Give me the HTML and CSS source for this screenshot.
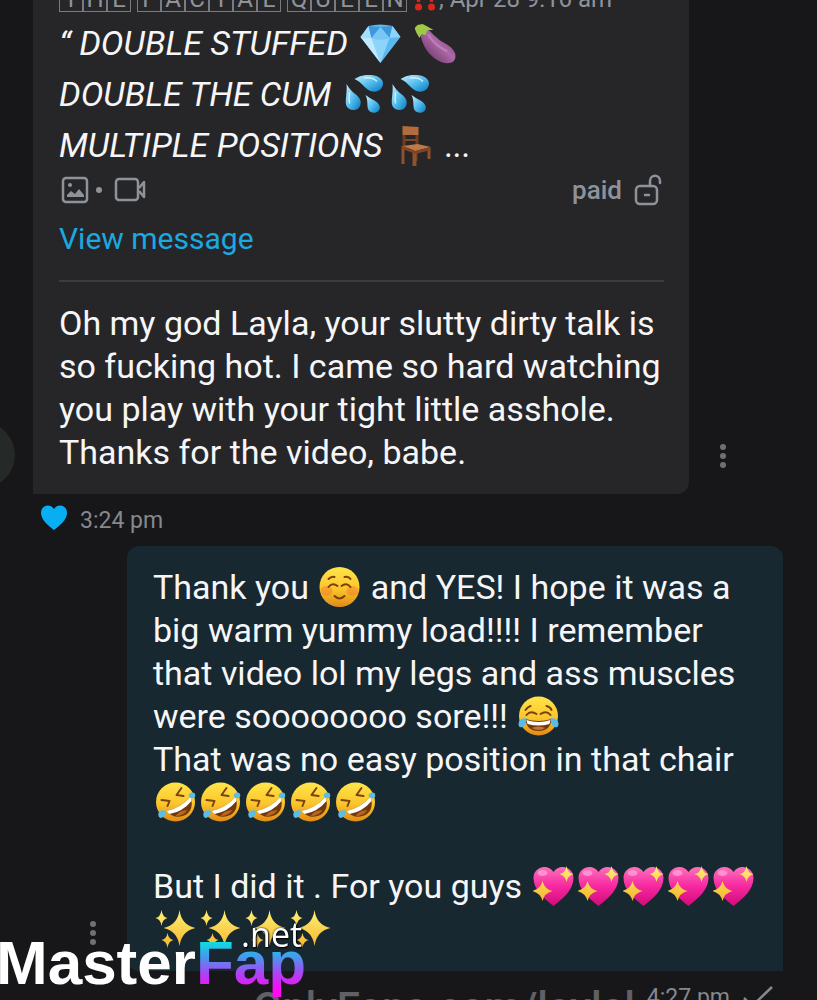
FILE: index.html
```
<!DOCTYPE html>
<html lang="en">
<head>
  <meta charset="UTF-8">
  <meta name="viewport" content="width=device-width, initial-scale=1.0">
  <title>Messages</title>
  <link rel="stylesheet" href="styles.css">
</head>
<body>
  <!-- Emoji and icon shapes -->
  <svg class="defs" aria-hidden="true">
    <defs>
      <linearGradient id="gFace" x1="0" y1="0" x2="0" y2="1"><stop offset="0" stop-color="#ffe54a"/><stop offset=".55" stop-color="#fbc52c"/><stop offset="1" stop-color="#e08a16"/></linearGradient>
      <linearGradient id="gDrop" x1="0" y1="0" x2="1" y2="1"><stop offset="0" stop-color="#c9f1ff"/><stop offset=".55" stop-color="#4db9ec"/><stop offset="1" stop-color="#0879bd"/></linearGradient>
      <linearGradient id="gEgg" x1="1" y1="0" x2="0" y2="1"><stop offset="0" stop-color="#653064"/><stop offset=".45" stop-color="#ad69a8"/><stop offset="1" stop-color="#56234f"/></linearGradient>
      <linearGradient id="gHeart" x1="0" y1="0" x2="0" y2="1"><stop offset="0" stop-color="#ff70bd"/><stop offset=".5" stop-color="#f6279f"/><stop offset="1" stop-color="#d20a79"/></linearGradient>
      <linearGradient id="gStar" x1="0" y1="0" x2="0" y2="1"><stop offset="0" stop-color="#fff073"/><stop offset="1" stop-color="#f4b52e"/></linearGradient>
    </defs>
    <symbol id="gem" viewBox="0 0 40 40">
      <path fill="#5cb8f1" d="M0 13 8 2q12-3 24 0l8 11-20 26z"/>
      <path fill="#a7ddfb" d="M8 2 0 13l11 1z"/>
      <path fill="#3f97dc" d="M8 2 11 14 20 3zM32 2 29 14 20 3z"/>
      <path fill="#76c7f5" d="M20 3 11 14q9 3 18 0z"/>
      <path fill="#8dd4fb" d="M32 2l8 11-11 1zM11 14q9 3 18 0l-9 25z"/>
      <path fill="#bfe9ff" d="M0 13l11 1 9 25z"/>
    </symbol>
    <symbol id="eggplant" viewBox="0 0 40 40">
      <path fill="url(#gEgg)" d="M4 7 12 5c5 4 9 10 17 14 9 5 13 11 10 17-3 5-12 4-19-1C10 28 6 18 4 7z"/>
      <path fill="none" stroke="#cf93ca" stroke-width="2" stroke-linecap="round" opacity=".6" d="M13 11c4 7 10 12 18 16"/>
      <path fill="#9fc944" d="M2 1 7 0l4 2 7 4-6 0-2 5-4-1-2 4-3-5-2-5z"/>
    </symbol>
    <symbol id="drops" viewBox="0 0 40 40">
      <path fill="url(#gDrop)" d="M10 4q8-5 17-4c9 1 13 6 11 11-2 6-9 7-14 4C18 11 17 7 10 4z"/>
      <path fill="url(#gDrop)" d="M2 9q4 7 10 11c6 5 5 11 1 14-4 2-9 1-11-3C0 26 3 18 2 9z"/>
      <path fill="url(#gDrop)" d="M21 20q4 3 8 5c6 3 8 8 5 11-3 3-8 2-10-1-2-4 0-9-3-15z"/>
      <path fill="none" stroke="#e4f9ff" stroke-width="1.5" stroke-linecap="round" opacity=".8" d="M20 3q8-1 12 3M5 18q-1 6 0 10"/>
    </symbol>
    <symbol id="chair" viewBox="0 0 40 40">
      <path fill="#6f3c20" d="M19 22h3v13h-3zM7 9h3v14H7zM20 9h3v12h-3z"/>
      <path fill="#b36b3e" d="M7 0l16 1v8L7 9z"/>
      <path fill="#8e512d" d="M6 20h3v18H6zM17 24h4v16h-4zM32 22h3v11h-3z"/>
      <path fill="#c27949" d="M7 20l15-2 13 3-15 4z"/>
      <path fill="#7f4525" d="M7 20l13 5v3L7 23zM20 25l15-4v3l-15 4zM9 13h13v2H9z"/>
    </symbol>
    <symbol id="smile" viewBox="0 0 40 40">
      <circle cx="20" cy="20" r="20" fill="url(#gFace)"/>
      <ellipse cx="7" cy="24" rx="6" ry="5" fill="#f36b2c" opacity=".4"/><ellipse cx="33" cy="24" rx="6" ry="5" fill="#f36b2c" opacity=".4"/>
      <path fill="none" stroke="#7b3f0c" stroke-width="2" stroke-linecap="round" d="M9 20q4-5 9-1M22 19q5-4 9 1M15 29q5 5 10 0M9 12q3-3 6-2M25 10q4-1 6 2"/>
    </symbol>
    <symbol id="joy" viewBox="0 0 40 40">
      <circle cx="20" cy="20" r="19.500" fill="url(#gFace)"/>
      <path fill="#713809" d="M7 23q13 4 26 0-1 12-13 12T7 23z"/>
      <path fill="#fff" d="M8 24q12 4 24 0l-1 4q-11 3-22 0z"/>
      <path fill="#c9752f" d="M13 32q7-3 14 0-7 4-14 0z"/>
      <path fill="none" stroke="#7b3f0c" stroke-width="2" stroke-linecap="round" d="M8 19q4-5 10-1M22 18q6-4 10 1M7 14q2-3 5-4M28 10q4 1 5 4"/>
      <path fill="#54bbea" d="M8 22q-8 0-8 6 0 4 4 3 4-2 4-9zM32 22q8 0 8 6 0 4-4 3-4-2-4-9z"/>
    </symbol>
    <symbol id="rofl" viewBox="0 0 40 40">
      <circle cx="20" cy="20" r="19.500" fill="url(#gFace)"/>
      <path fill="#713809" d="M11 29Q25 26 35 15q4 12-5 18-11 5-19-4z"/>
      <path fill="#fff" d="M11 29Q25 26 35 15l1 4Q27 30 14 32z"/>
      <path fill="#b86422" d="M20 34q4-6 12-6-4 6-12 6z"/>
      <path fill="none" stroke="#7b4410" stroke-width="2" stroke-linecap="round" stroke-linejoin="round" d="M6 18l8 1-2 5M26 6l-5 7 7 1"/>
      <path fill="#59bdea" d="M33 14q1-5 6-3 2 4-1 5-3 1-5-2zM11 29q-6-2-8 2-1 4 2 5 4 0 6-7z"/>
    </symbol>
    <symbol id="sparkheart" viewBox="0 0 40 40">
      <path fill="url(#gHeart)" d="M20 40C11 33 0 24 0 12 0 1 14-3 20 6c6-9 20-5 20 6 0 12-11 21-20 28z"/>
      <ellipse cx="9" cy="7" rx="5" ry="3" fill="#ffb5dc" opacity=".6"/>
      <path fill="url(#gStar)" d="M9 15q2 8 10 10-8 2-10 10-2-8-10-10 8-2 10-10zM33 0q1 7 7 8-6 2-7 8-1-6-7-8 6-1 7-8z"/>
    </symbol>
    <symbol id="sparkles" viewBox="0 0 40 40">
      <path fill="url(#gStar)" d="M24 1q2 15 16 18-14 3-16 18-2-15-16-18 14-3 16-18zM6 1q1 7 6 8-5 1-6 8-1-7-6-8 5-1 6-8zM12 24q1 6 6 7-5 1-6 8-1-7-6-8 5-1 6-7z"/>
    </symbol>
    <symbol id="bang" viewBox="0 0 24 24">
      <path fill="#d8281c" d="M2 0h7L7 15H4zM15 0h7l-2 15h-3z"/><circle cx="5.500" cy="20" r="3.500" fill="#d8281c"/><circle cx="18.500" cy="20" r="3.500" fill="#d8281c"/>
    </symbol>
  </svg>

  <main class="chat">
    <!-- Received message -->
    <section class="row">
      <div class="avatar"></div>
      <article class="bubble received">
        <div class="quote-author">
          <span class="boxed"><b>T</b><b>H</b><b>E</b></span>
          <span class="boxed"><b>F</b><b>A</b><b>C</b><b>I</b><b>A</b><b>L</b></span>
          <span class="boxed"><b>Q</b><b>U</b><b>E</b><b>E</b><b>N</b></span>
          <svg class="bang"><use href="#bang"/></svg>
          <span class="date">, Apr 28 9:16 am</span>
        </div>
        <blockquote class="quote">
          “ DOUBLE STUFFED <svg class="emoji"><use href="#gem"/></svg> <svg class="emoji"><use href="#eggplant"/></svg><br>
          DOUBLE THE CUM <svg class="emoji"><use href="#drops"/></svg><svg class="emoji"><use href="#drops"/></svg><br>
          MULTIPLE POSITIONS <svg class="emoji"><use href="#chair"/></svg> ...
        </blockquote>
        <div class="media">
          <svg class="media-icon" viewBox="0 0 28 28"><rect x="2" y="2" width="24" height="24" rx="3" fill="none" stroke="currentColor" stroke-width="2.500"/><circle cx="9" cy="9" r="2" fill="currentColor"/><path fill="currentColor" d="M6 21v-2l4-4 4 3 4-5 5 6v2z"/></svg>
          <span class="dot"></span>
          <svg class="video-icon" viewBox="0 0 32 26"><rect x="2" y="2" width="22" height="21" rx="3" fill="none" stroke="currentColor" stroke-width="2.500"/><path fill="none" stroke="currentColor" stroke-width="2.500" stroke-linejoin="round" d="M25 11l5-6v15l-5-6"/></svg>
          <span class="paid">paid</span>
          <svg class="lock-icon" viewBox="0 0 28 32"><rect x="2" y="12" width="21" height="18" rx="4" fill="none" stroke="currentColor" stroke-width="2.500"/><path fill="none" stroke="currentColor" stroke-width="2.500" stroke-linecap="round" d="M16 12V7c0-7 10-7 10 0v2M11 21h4"/></svg>
        </div>
        <a class="view" href="#">View message</a>
        <p class="text">Oh my god Layla, your slutty dirty talk is<br>so fucking hot. I came so hard watching<br>you play with your tight little asshole.<br>Thanks for the video, babe.</p>
      </article>
      <button class="menu" aria-label="More options"><svg viewBox="0 0 6 24"><circle cx="3" cy="3" r="3"/><circle cx="3" cy="12" r="3"/><circle cx="3" cy="21" r="3"/></svg></button>
    </section>
    <div class="meta">
      <svg class="like" viewBox="0 0 26 25"><path fill="#08aef2" d="M13 25C8 21 0 15 0 8 0 0 9-2 13 4c4-6 13-4 13 4 0 7-8 13-13 17z"/></svg>
      <time>3:24 pm</time>
    </div>

    <!-- Sent message -->
    <section class="row own">
      <article class="bubble sent">
        <p>Thank you <svg class="emoji"><use href="#smile"/></svg> and YES! I hope it was a<br>big warm yummy load!!!! I remember<br>that video lol my legs and ass muscles<br>were soooooooo sore!!! <svg class="emoji"><use href="#joy"/></svg><br>That was no easy position in that chair<br><svg class="emoji"><use href="#rofl"/></svg><svg class="emoji"><use href="#rofl"/></svg><svg class="emoji"><use href="#rofl"/></svg><svg class="emoji"><use href="#rofl"/></svg><svg class="emoji"><use href="#rofl"/></svg></p>
        <p>But I did it . For you guys <svg class="emoji"><use href="#sparkheart"/></svg><svg class="emoji"><use href="#sparkheart"/></svg><svg class="emoji"><use href="#sparkheart"/></svg><svg class="emoji"><use href="#sparkheart"/></svg><svg class="emoji"><use href="#sparkheart"/></svg><br><svg class="emoji"><use href="#sparkles"/></svg><svg class="emoji"><use href="#sparkles"/></svg><svg class="emoji"><use href="#sparkles"/></svg><svg class="emoji"><use href="#sparkles"/></svg></p>
      </article>
      <button class="menu" aria-label="More options"><svg viewBox="0 0 6 24"><circle cx="3" cy="3" r="3"/><circle cx="3" cy="12" r="3"/><circle cx="3" cy="21" r="3"/></svg></button>
    </section>
    <div class="meta own-meta">
      <span class="profile">OnlyFans.com/laylal</span>
      <time>4:27 pm</time>
      <svg class="check" viewBox="0 0 30 22"><path fill="none" stroke="currentColor" stroke-width="2.500" d="M1 12l8 8L29 1"/></svg>
    </div>
  </main>

  <div class="brand">Master<span class="brand-end">Fap</span><span class="brand-net">.net</span></div>
</body>
</html>
```
FILE: styles.css
```
* {
  box-sizing: border-box;
}
body {
  margin: 0;
  height: 100vh;
  overflow: hidden;
  background-color: #17171a;
  color: #f6f6f8;
  font-family: Roboto, "Liberation Sans", sans-serif;
  font-size: 34px;
  line-height: 43px;
}
p {
  margin: 0;
}
.defs {
  position: absolute;
  width: 0;
  height: 0;
}
.chat {
  padding: 0 34px 0 33px;
}
.row {
  display: flex;
  align-items: flex-end;
  position: relative;
}
.own {
  flex-direction: row-reverse;
}
.bubble {
  flex: 1;
  padding: 20px 25px 20px 26px;
  white-space: nowrap;
}
.received {
  margin-top: -37px;
  background-color: #262629;
  border-radius: 12px 12px 12px 0;
}
.sent {
  background-color: #182830;
  border-radius: 12px 12px 0 12px;
}
.sent p + p {
  margin-top: 41px;
}
.avatar {
  position: absolute;
  left: -84px;
  bottom: 6px;
  width: 66px;
  height: 66px;
  border-radius: 50%;
  background-color: #252928;
}
.emoji {
  width: 41px;
  height: 40px;
  margin: 0 2px;
  vertical-align: -8px;
}

/* Quoted message */
.quote-author {
  display: flex;
  align-items: center;
  gap: 6px;
  height: 32px;
  margin-bottom: 3px;
  color: #8f949b;
  font-size: 24px;
  line-height: 28px;
}
.boxed {
  display: flex;
}
.boxed b {
  width: 24px;
  height: 26px;
  border: 1px solid #777c82;
  font-weight: 400;
  line-height: 25px;
  text-align: center;
}
.bang {
  width: 24px;
  height: 24px;
}
.date {
  margin-left: -4px;
}
.quote {
  margin: 0;
  font-style: italic;
  line-height: 51px;
}
.quote .emoji {
  margin: 0 1px 0 4px;
  vertical-align: -9px;
}
.media {
  display: flex;
  align-items: center;
  height: 38px;
  padding: 0 2px;
  color: #8e939a;
  font-size: 26px;
}
.media-icon {
  width: 28px;
  height: 28px;
}
.dot {
  width: 6px;
  height: 6px;
  margin: 0 12px 0 7px;
  border-radius: 50%;
  background-color: #8e939a;
}
.video-icon {
  width: 32px;
  height: 26px;
}
.paid {
  margin-left: auto;
  margin-right: 12px;
  font-weight: 500;
}
.lock-icon {
  width: 28px;
  height: 32px;
}
.view {
  display: block;
  padding: 8px 0 20px;
  border-bottom: 2px solid #3b3c40;
  color: #1ba9e0;
  font-size: 30px;
  text-decoration: none;
}
.text {
  margin-top: 20px;
}

/* Options button and message footer */
.menu {
  flex: 0 0 94px;
  padding: 0 0 26px;
  border: none;
  background: none;
  text-align: left;
  line-height: 0;
  cursor: pointer;
}
.menu svg {
  width: 6px;
  height: 24px;
  margin: 0 31px;
  fill: #6d7175;
}
.own .menu {
  text-align: right;
}
.meta {
  display: flex;
  align-items: center;
  gap: 13px;
  height: 52px;
  padding-left: 8px;
  color: #85898e;
  font-size: 23px;
}
.like {
  width: 26px;
  height: 25px;
  margin-bottom: 6px;
}
.own-meta {
  justify-content: flex-end;
  padding-right: 10px;
  position: relative;
}
.profile {
  position: absolute;
  right: 148px;
  top: 15px;
  color: #606164;
  font-size: 42px;
  font-weight: 500;
}
.check {
  width: 30px;
  height: 22px;
}

/* Site name over the chat */
.brand {
  position: fixed;
  left: -4px;
  bottom: 0;
  color: #fff;
  font-family: "Liberation Sans", sans-serif;
  font-size: 62px;
  font-weight: 700;
  line-height: 74px;
}
.brand-end {
  background: linear-gradient(#00efdc 15%, #3f9fec 40%, #a846f4 65%, #ff08f4 90%);
  -webkit-background-clip: text;
  background-clip: text;
  color: transparent;
}
.brand-net {
  position: absolute;
  right: 4px;
  top: -12px;
  font-family: "Open Sans", sans-serif;
  font-size: 34px;
  font-weight: 400;
  line-height: 40px;
  text-shadow: 0 0 2px #000, 1px 1px 2px #000;
}
```
